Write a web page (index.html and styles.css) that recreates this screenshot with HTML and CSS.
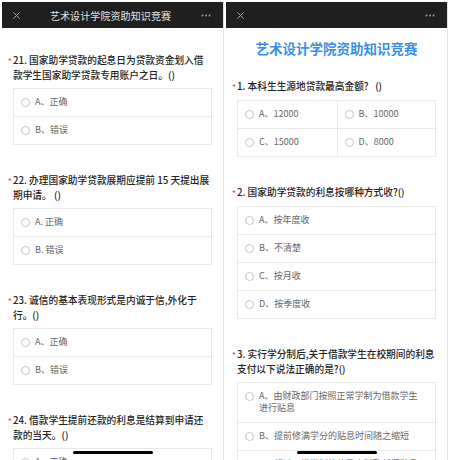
FILE: index.html
```html
<!DOCTYPE html>
<html lang="zh-CN">
<head>
  <meta charset="UTF-8" />
  <meta name="viewport" content="width=device-width, initial-scale=1.0"/>
  <title>艺术设计学院资助知识竞赛</title>
  <link rel="stylesheet" href="styles.css">
</head>
<body>

  <div class="screens">

    <!-- left screen: questions 21 - 24 -->
    <section class="phone">
      <header class="topbar">
        <svg class="close" width="7" height="7" viewBox="0 0 7 7"><path d="M0.5 0.5 L6.5 6.5 M6.5 0.5 L0.5 6.5" /></svg>
        <span class="topbar-title">艺术设计学院资助知识竞赛</span>
        <svg class="more" width="10" height="3" viewBox="0 0 10 3"><circle cx="1.5" cy="1.5" r="0.9"/><circle cx="5" cy="1.5" r="0.9"/><circle cx="8.5" cy="1.5" r="0.9"/></svg>
      </header>

      <div class="content">
        <div class="question">
          <div class="q-title"><span class="req">*</span>21. 国家助学贷款的起息日为贷款资金划入借款学生国家助学贷款专用账户之日。()</div>
          <ul class="options">
            <li><span class="radio"></span><span>A、正确</span></li>
            <li><span class="radio"></span><span>B、错误</span></li>
          </ul>
        </div>

        <div class="question">
          <div class="q-title"><span class="req">*</span>22. 办理国家助学贷款展期应提前 15 天提出展期申请。 ()</div>
          <ul class="options">
            <li><span class="radio"></span><span>A. 正确</span></li>
            <li><span class="radio"></span><span>B. 错误</span></li>
          </ul>
        </div>

        <div class="question">
          <div class="q-title"><span class="req">*</span>23. 诚信的基本表现形式是内诚于信,外化于行。()</div>
          <ul class="options">
            <li><span class="radio"></span><span>A、正确</span></li>
            <li><span class="radio"></span><span>B、错误</span></li>
          </ul>
        </div>

        <div class="question">
          <div class="q-title"><span class="req">*</span>24. 借款学生提前还款的利息是结算到申请还款的当天。()</div>
          <ul class="options">
            <li><span class="radio"></span><span>A、正确</span></li>
            <li><span class="radio"></span><span>B、错误</span></li>
          </ul>
        </div>
      </div>

      <div class="home-bar"></div>
    </section>

    <!-- right screen: questions 1 - 3 -->
    <section class="phone">
      <header class="topbar">
        <svg class="close" width="7" height="7" viewBox="0 0 7 7"><path d="M0.5 0.5 L6.5 6.5 M6.5 0.5 L0.5 6.5" /></svg>
        <span class="topbar-title"></span>
        <svg class="more" width="10" height="3" viewBox="0 0 10 3"><circle cx="1.5" cy="1.5" r="0.9"/><circle cx="5" cy="1.5" r="0.9"/><circle cx="8.5" cy="1.5" r="0.9"/></svg>
      </header>

      <div class="content with-title">
        <h1 class="page-title">艺术设计学院资助知识竞赛</h1>

        <div class="question">
          <div class="q-title"><span class="req">*</span>1. 本科生生源地贷款最高金额?&nbsp;&nbsp; ()</div>
          <ul class="options grid">
            <li><span class="radio"></span><span>A、12000</span></li>
            <li><span class="radio"></span><span>B、10000</span></li>
            <li><span class="radio"></span><span>C、15000</span></li>
            <li><span class="radio"></span><span>D、8000</span></li>
          </ul>
        </div>

        <div class="question">
          <div class="q-title"><span class="req">*</span>2. 国家助学贷款的利息按哪种方式收?()</div>
          <ul class="options">
            <li><span class="radio"></span><span>A、按年度收</span></li>
            <li><span class="radio"></span><span>B、不清楚</span></li>
            <li><span class="radio"></span><span>C、按月收</span></li>
            <li><span class="radio"></span><span>D、按季度收</span></li>
          </ul>
        </div>

        <div class="question">
          <div class="q-title"><span class="req">*</span>3. 实行学分制后,关于借款学生在校期间的利息支付以下说法正确的是?()</div>
          <ul class="options">
            <li><span class="radio"></span><span>A、由财政部门按照正常学制为借款学生进行贴息</span></li>
            <li><span class="radio"></span><span>B、提前修满学分的贴息时间随之缩短</span></li>
            <li><span class="radio"></span><span>C、超过正常学制外的仍由财政部门贴息</span></li>
          </ul>
        </div>
      </div>

      <div class="home-bar"></div>
    </section>

  </div>

</body>
</html>
```

FILE: styles.css
```css
body {
  margin: 0;
  background-color: #fff;
  font-family: "Noto Sans CJK SC", "Liberation Sans", sans-serif;
}
.screens {
  display: flex;
  gap: 2px;
  padding: 2px 0 0 2px;
}
.phone {
  position: relative;
  width: 221px;
  height: 458px;
  overflow: hidden;
  border-right: 1px solid #e3e3e3;
  background-color: #fff;
}
.topbar {
  height: 26px;
  background-color: #1f1f1f;
  display: flex;
  align-items: center;
  padding: 0 12px 0 11px;
}
.topbar-title {
  flex: 1;
  text-align: center;
  color: #e6e6e6;
  font-size: 10px;
  letter-spacing: 0.1px;
}
.close path {
  stroke: #a8a8a8;
  stroke-width: 1;
  fill: none;
}
.more circle {
  fill: #a8a8a8;
}
.content {
  padding: 25px 11px 0;
}
.content.with-title {
  padding-top: 11px;
}
.page-title {
  margin: 0 0 22px;
  text-align: center;
  color: #3a8fe4;
  font-size: 13.5px;
  line-height: 18px;
  font-weight: 600;
}
.question + .question {
  margin-top: 28px;
}
.q-title {
  font-size: 9.7px;
  line-height: 14px;
  color: #222;
  font-weight: 500;
}
.req {
  display: inline-block;
  width: 5px;
  margin-left: -5px;
  color: #e4393c;
  font-size: 8px;
}
.options {
  list-style: none;
  margin: 6px 0 0;
  padding: 0;
  border: 1px solid #e8e8e8;
}
.options li {
  display: flex;
  align-items: flex-start;
  gap: 5px;
  padding: 7px 10px 8px 7px;
  font-size: 9px;
  line-height: 12px;
  color: #666;
}
.options li + li {
  border-top: 1px solid #e8e8e8;
}
.options.grid {
  display: grid;
  grid-template-columns: 1fr 1fr;
}
.options.grid li + li {
  border-top: 0;
}
.options.grid li:nth-child(even) {
  border-left: 1px solid #e8e8e8;
}
.options.grid li:nth-child(n+3) {
  border-top: 1px solid #e8e8e8;
}
.radio {
  flex: none;
  width: 9px;
  height: 9px;
  margin-top: 1.5px;
  box-sizing: border-box;
  border: 1px solid #c4c4c4;
  border-radius: 50%;
}
.home-bar {
  position: absolute;
  left: 71px;
  top: 449px;
  width: 80px;
  height: 3px;
  border-radius: 2px;
  background-color: #000;
}
```
